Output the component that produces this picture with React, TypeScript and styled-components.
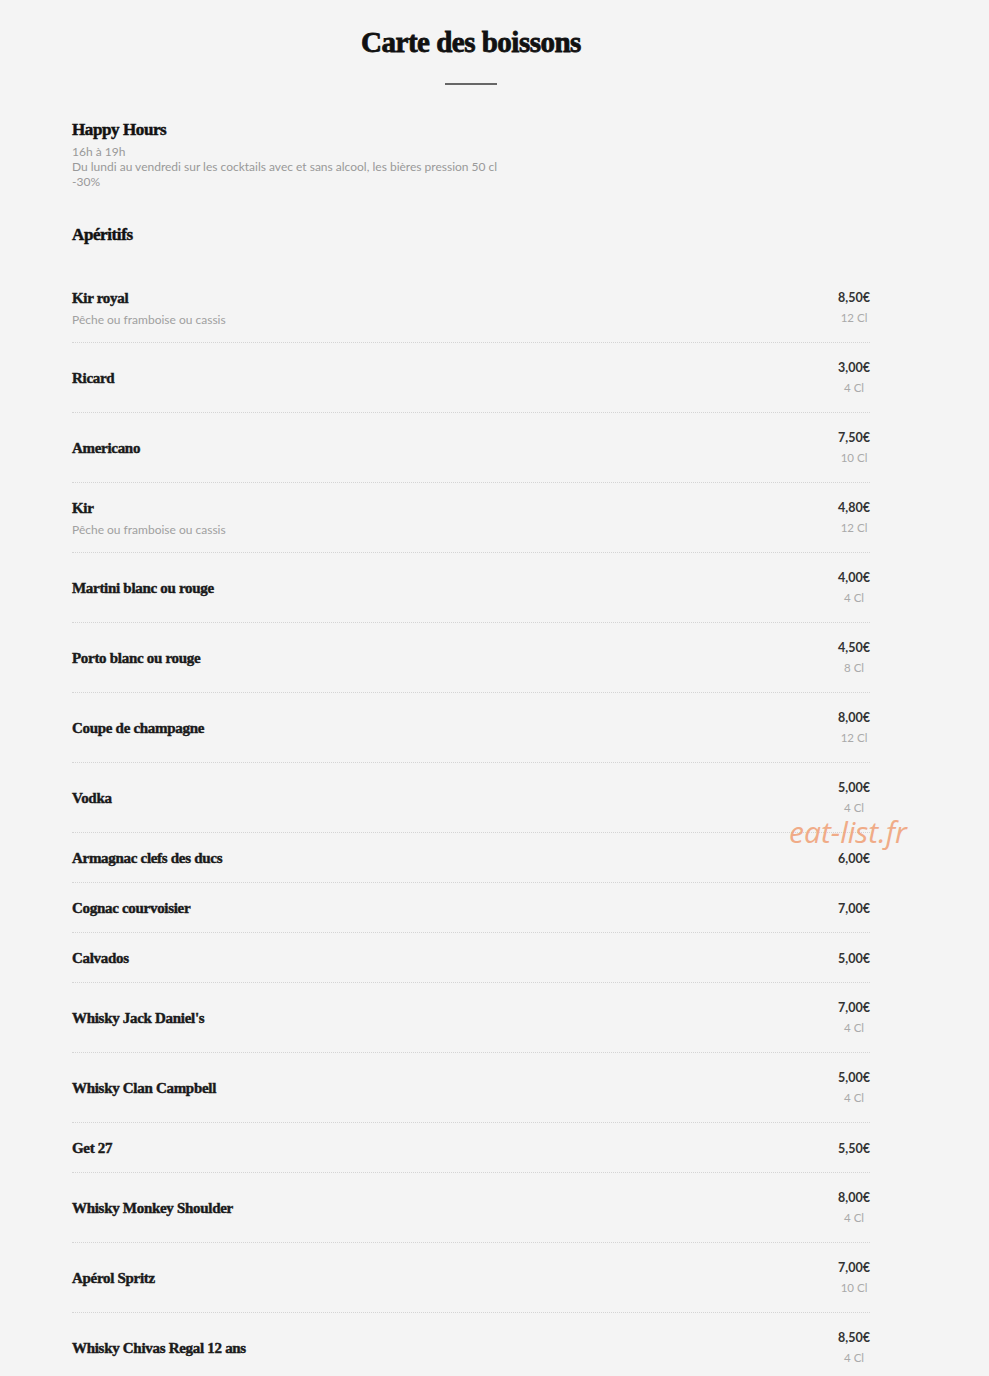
import React from 'react'
import styled, { createGlobalStyle } from 'styled-components'

type Drink = {
  name: string
  desc?: string
  price: string
  volume?: string
}

const aperitifs: Drink[] = [
  { name: 'Kir royal', desc: 'Pêche ou framboise ou cassis', price: '8,50€', volume: '12 Cl' },
  { name: 'Ricard', price: '3,00€', volume: '4 Cl' },
  { name: 'Americano', price: '7,50€', volume: '10 Cl' },
  { name: 'Kir', desc: 'Pêche ou framboise ou cassis', price: '4,80€', volume: '12 Cl' },
  { name: 'Martini blanc ou rouge', price: '4,00€', volume: '4 Cl' },
  { name: 'Porto blanc ou rouge', price: '4,50€', volume: '8 Cl' },
  { name: 'Coupe de champagne', price: '8,00€', volume: '12 Cl' },
  { name: 'Vodka', price: '5,00€', volume: '4 Cl' },
  { name: 'Armagnac clefs des ducs', price: '6,00€' },
  { name: 'Cognac courvoisier', price: '7,00€' },
  { name: 'Calvados', price: '5,00€' },
  { name: "Whisky Jack Daniel's", price: '7,00€', volume: '4 Cl' },
  { name: 'Whisky Clan Campbell', price: '5,00€', volume: '4 Cl' },
  { name: 'Get 27', price: '5,50€' },
  { name: 'Whisky Monkey Shoulder', price: '8,00€', volume: '4 Cl' },
  { name: 'Apérol Spritz', price: '7,00€', volume: '10 Cl' },
  { name: 'Whisky Chivas Regal 12 ans', price: '8,50€', volume: '4 Cl' },
]

const App = () => {
  return (
    <>
      <GlobalStyle />
      <Page>
        <Menu>
          <Title>Carte des boissons</Title>
          <Rule />

          <HappyHours>
            <SectionTitle>Happy Hours</SectionTitle>
            <Note>
              16h à 19h
              <br />
              Du lundi au vendredi sur les cocktails avec et sans alcool, les bières pression 50 cl
              <br />
              -30%
            </Note>
          </HappyHours>

          <SectionTitle>Apéritifs</SectionTitle>

          <List>
            {aperitifs.map((d, i) => (
              <Row key={d.name + i} $last={i === aperitifs.length - 1}>
                <NameCol>
                  <Name>{d.name}</Name>
                  {d.desc && <Desc>{d.desc}</Desc>}
                </NameCol>
                <PriceCol>
                  <Price>{d.price}</Price>
                  {d.volume && <Volume>{d.volume}</Volume>}
                </PriceCol>
              </Row>
            ))}
          </List>
        </Menu>

        <Watermark>eat-list.fr</Watermark>
      </Page>
    </>
  )
}

export default App

// Styled Components

const GlobalStyle = createGlobalStyle`
  html, body {
    margin: 0;
    padding: 0;
    background: #f4f4f4;
  }
  body {
    font-family: 'Lato', 'Open Sans', sans-serif;
  }
`

const Page = styled.div`
  position: relative;
  width: 989px;
  height: 1376px;
  overflow: hidden;
  background: #f4f4f4;
`

const Menu = styled.div`
  width: 798px;
  margin-left: 72px;
  padding-top: 24px;
`

const Title = styled.h1`
  margin: 0;
  text-align: center;
  font-family: 'Liberation Serif', serif;
  font-weight: 900;
  font-size: 29px;
  line-height: 36px;
  letter-spacing: -0.5px;
  color: #111;
  -webkit-text-stroke: 0.8px #111;
`

const Rule = styled.div`
  width: 52px;
  height: 2px;
  background: #666;
  margin: 23px auto 0;
`

const HappyHours = styled.div`
  margin-top: 34px;
  margin-bottom: 35px;
`

const SectionTitle = styled.h2`
  margin: 0;
  font-family: 'Liberation Serif', serif;
  font-weight: 700;
  font-size: 17px;
  line-height: 22px;
  letter-spacing: -0.4px;
  color: #111;
  -webkit-text-stroke: 0.5px #111;
`

const Note = styled.p`
  margin: 3px 0 0;
  font-size: 12px;
  line-height: 15px;
  color: #999;
`

const List = styled.div`
  margin-top: 27px;
`

const Row = styled.div<{ $last?: boolean }>`
  display: flex;
  justify-content: space-between;
  align-items: center;
  min-height: 20px;
  padding: 15px 0 14px;
  border-bottom: ${(p) => (p.$last ? '1px solid transparent' : '1px dotted #d4d4d4')};
`

const NameCol = styled.div`
  display: flex;
  flex-direction: column;
`

const Name = styled.div`
  font-family: 'Liberation Serif', serif;
  font-weight: 700;
  font-size: 15px;
  line-height: 20px;
  letter-spacing: -0.3px;
  color: #1a1a1a;
  -webkit-text-stroke: 0.45px #1a1a1a;
`

const Desc = styled.div`
  margin: 2px 0 -2px;
  font-size: 12px;
  line-height: 20px;
  color: #a0a0a0;
`

const PriceCol = styled.div`
  display: flex;
  flex-direction: column;
  align-items: center;
`

const Price = styled.div`
  font-size: 12.5px;
  font-weight: 700;
  line-height: 19px;
  color: #333;
`

const Volume = styled.div`
  font-size: 11.5px;
  line-height: 21px;
  color: #aaa;
`

const Watermark = styled.div`
  position: absolute;
  left: 789px;
  top: 812px;
  font-family: 'Open Sans', sans-serif;
  font-style: italic;
  font-weight: 400;
  font-size: 30px;
  line-height: 40px;
  color: #f0a47c;
  opacity: 0.9;
`
